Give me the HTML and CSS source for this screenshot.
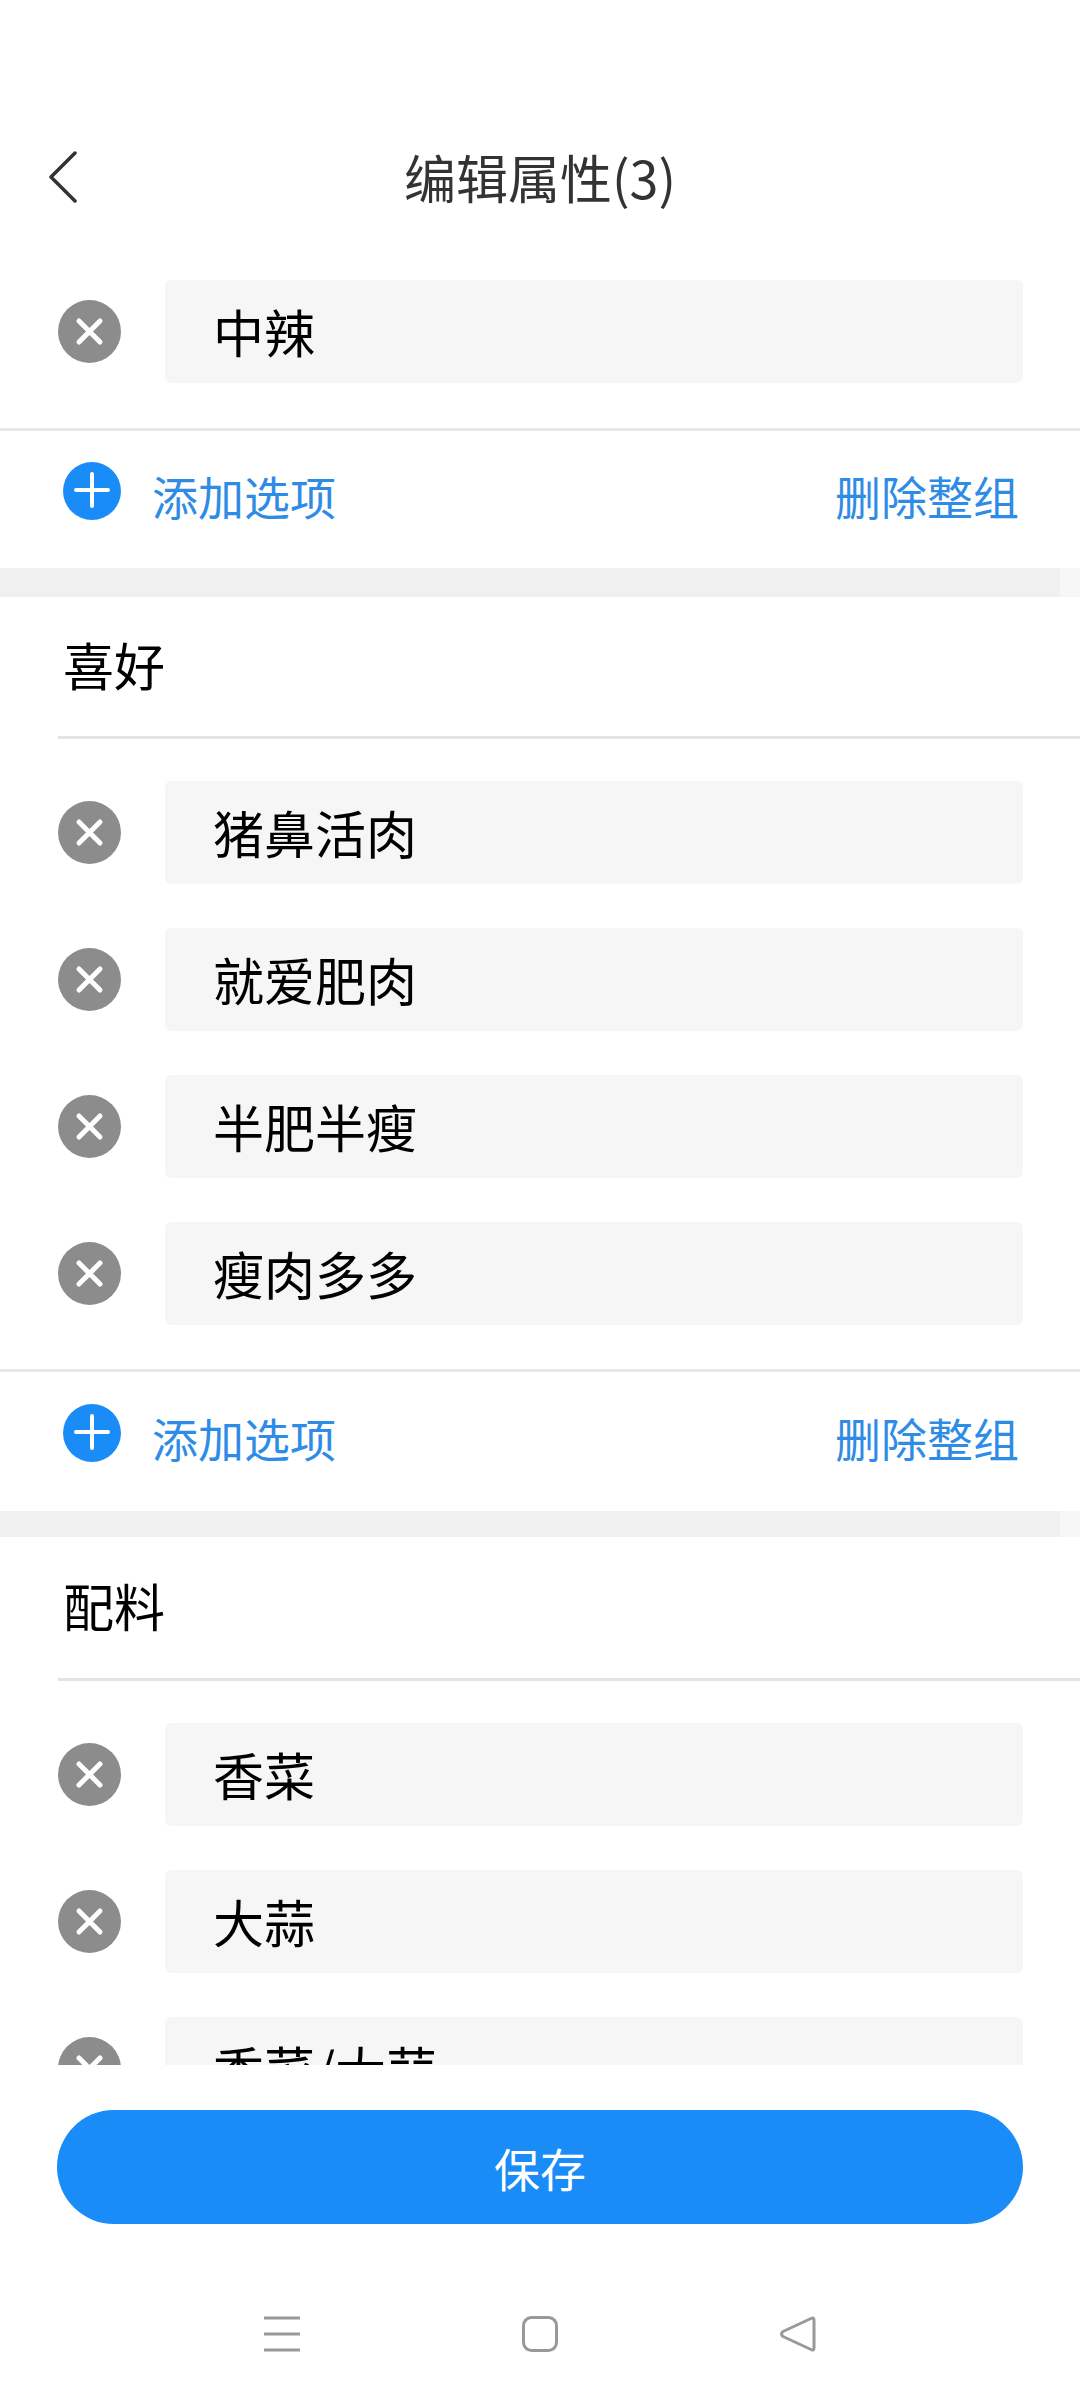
FILE: index.html
```html
<!DOCTYPE HTML>
<html>

<head>
    <meta name="viewport" content="width=device-width, initial-scale=1">
    <title>编辑属性</title>
    <link rel="stylesheet" href="styles.css">
</head>

<body>
    <svg class="defs" width="0" height="0">
        <symbol id="icon-remove" viewBox="0 0 63 63">
            <circle cx="31.5" cy="31.5" r="31.5" fill="#8c8c8c" />
            <path d="M21 21L42 42M42 21L21 42" stroke="#fff" stroke-width="5" stroke-linecap="round" />
        </symbol>
        <symbol id="icon-add" viewBox="0 0 58 58">
            <circle cx="29" cy="29" r="29" fill="#1a8cf8" />
            <path d="M13 28H45M29 12V44" stroke="#fff" stroke-width="4" stroke-linecap="round" />
        </symbol>
    </svg>

    <div class="page">
        <div class="topnav">
            <svg class="back" width="30" height="52" viewBox="0 0 30 52">
                <path d="M27 2L3 26L27 50" fill="none" stroke="#333" stroke-width="3.5" stroke-linecap="round" stroke-linejoin="round" />
            </svg>
            <h1>编辑属性(3)</h1>
        </div>

        <div class="content">
            <div class="options first">
                <div class="option">
                    <svg class="remove"><use href="#icon-remove" /></svg>
                    <div class="field">中辣</div>
                </div>
            </div>
            <div class="actions">
                <div class="add">
                    <svg class="plus"><use href="#icon-add" /></svg>
                    <span>添加选项</span>
                </div>
                <span class="delete">删除整组</span>
            </div>
            <div class="band"></div>

            <div class="group-title">喜好</div>
            <div class="options">
                <div class="option">
                    <svg class="remove"><use href="#icon-remove" /></svg>
                    <div class="field">猪鼻活肉</div>
                </div>
                <div class="option">
                    <svg class="remove"><use href="#icon-remove" /></svg>
                    <div class="field">就爱肥肉</div>
                </div>
                <div class="option">
                    <svg class="remove"><use href="#icon-remove" /></svg>
                    <div class="field">半肥半瘦</div>
                </div>
                <div class="option">
                    <svg class="remove"><use href="#icon-remove" /></svg>
                    <div class="field">瘦肉多多</div>
                </div>
            </div>
            <div class="actions tall">
                <div class="add">
                    <svg class="plus"><use href="#icon-add" /></svg>
                    <span>添加选项</span>
                </div>
                <span class="delete">删除整组</span>
            </div>
            <div class="band short"></div>

            <div class="group-title tall">配料</div>
            <div class="options">
                <div class="option">
                    <svg class="remove"><use href="#icon-remove" /></svg>
                    <div class="field">香菜</div>
                </div>
                <div class="option">
                    <svg class="remove"><use href="#icon-remove" /></svg>
                    <div class="field">大蒜</div>
                </div>
                <div class="option">
                    <svg class="remove"><use href="#icon-remove" /></svg>
                    <div class="field">香菜/大蒜</div>
                </div>
            </div>
        </div>

        <div class="footer">
            <div class="button">保存</div>
        </div>

        <div class="navbar">
            <svg width="36" height="36" viewBox="0 0 36 36">
                <path d="M0 2H36M0 18H36M0 34H36" stroke="#999" stroke-width="3" />
            </svg>
            <svg width="36" height="36" viewBox="0 0 36 36">
                <rect x="1.500" y="1.500" width="33" height="33" rx="8" fill="none" stroke="#999" stroke-width="3" />
            </svg>
            <svg width="36" height="36" viewBox="0 0 36 36">
                <path d="M34 4V32Q34 35 31 33.500L3 20.500Q0 18 3 15.500L31 2.500Q34 1 34 4Z" fill="none" stroke="#999" stroke-width="3" stroke-linejoin="round" />
            </svg>
        </div>
    </div>
</body>

</html>
```

FILE: styles.css
```css
html {
    font-family: "Noto Sans CJK SC", "Noto Sans", sans-serif;
}

body {
    margin: 0;
    background-color: #fff;
}

.defs {
    display: block;
    height: 0;
}

.page {
    display: flex;
    flex-direction: column;
    width: 1080px;
    height: 2400px;
    overflow: hidden;
}

.topnav {
    position: relative;
    display: flex;
    justify-content: center;
    align-items: center;
    height: 120px;
    margin-top: 119px;
    flex: none;
}

.topnav h1 {
    margin: 0 0 6px;
    font-size: 52px;
    font-weight: normal;
    color: #333;
}

.back {
    position: absolute;
    left: 48px;
    top: 32px;
}

.content {
    height: 1826px;
    flex: none;
    overflow: hidden;
}

.options {
    display: flex;
    flex-direction: column;
    gap: 44px;
    padding: 42px 57px 44px 58px;
}

.options.first {
    padding-top: 41px;
    padding-bottom: 45px;
}

.option {
    display: flex;
    align-items: center;
    gap: 44px;
}

.remove {
    width: 63px;
    height: 63px;
    flex: none;
}

.field {
    flex: 1;
    height: 103px;
    padding-left: 48px;
    border-radius: 6px;
    background-color: #f6f6f6;
    font-size: 51px;
    line-height: 103px;
    color: #000;
}

.actions {
    display: flex;
    justify-content: space-between;
    height: 106px;
    padding: 31px 61px 0 63px;
    border-top: 3px solid #e8e8e8;
    font-size: 46px;
    color: #2f8ce6;
}

.actions.tall {
    height: 107px;
    padding-top: 32px;
}

.add {
    display: flex;
    gap: 31px;
}

.add span,
.delete {
    line-height: 66px;
}

.plus {
    width: 58px;
    height: 58px;
    flex: none;
}

.band {
    height: 29px;
    background: linear-gradient(to right, #f0f0f0 1060px, #f6f6f6 1060px);
}

.band.short {
    height: 26px;
}

.group-title {
    height: 139px;
    margin-left: 58px;
    padding-left: 5px;
    border-bottom: 3px solid #e4e4e4;
    font-size: 51px;
    line-height: 134px;
    color: #000;
}

.group-title.tall {
    height: 141px;
    line-height: 136px;
}

.footer {
    padding: 45px 57px 0;
}

.button {
    height: 114px;
    border-radius: 57px;
    background-color: #1a8cf8;
    color: #fff;
    font-size: 46px;
    line-height: 114px;
    text-align: center;
}

.navbar {
    display: flex;
    justify-content: center;
    gap: 222px;
    align-items: center;
    margin-top: 92px;
}
```
